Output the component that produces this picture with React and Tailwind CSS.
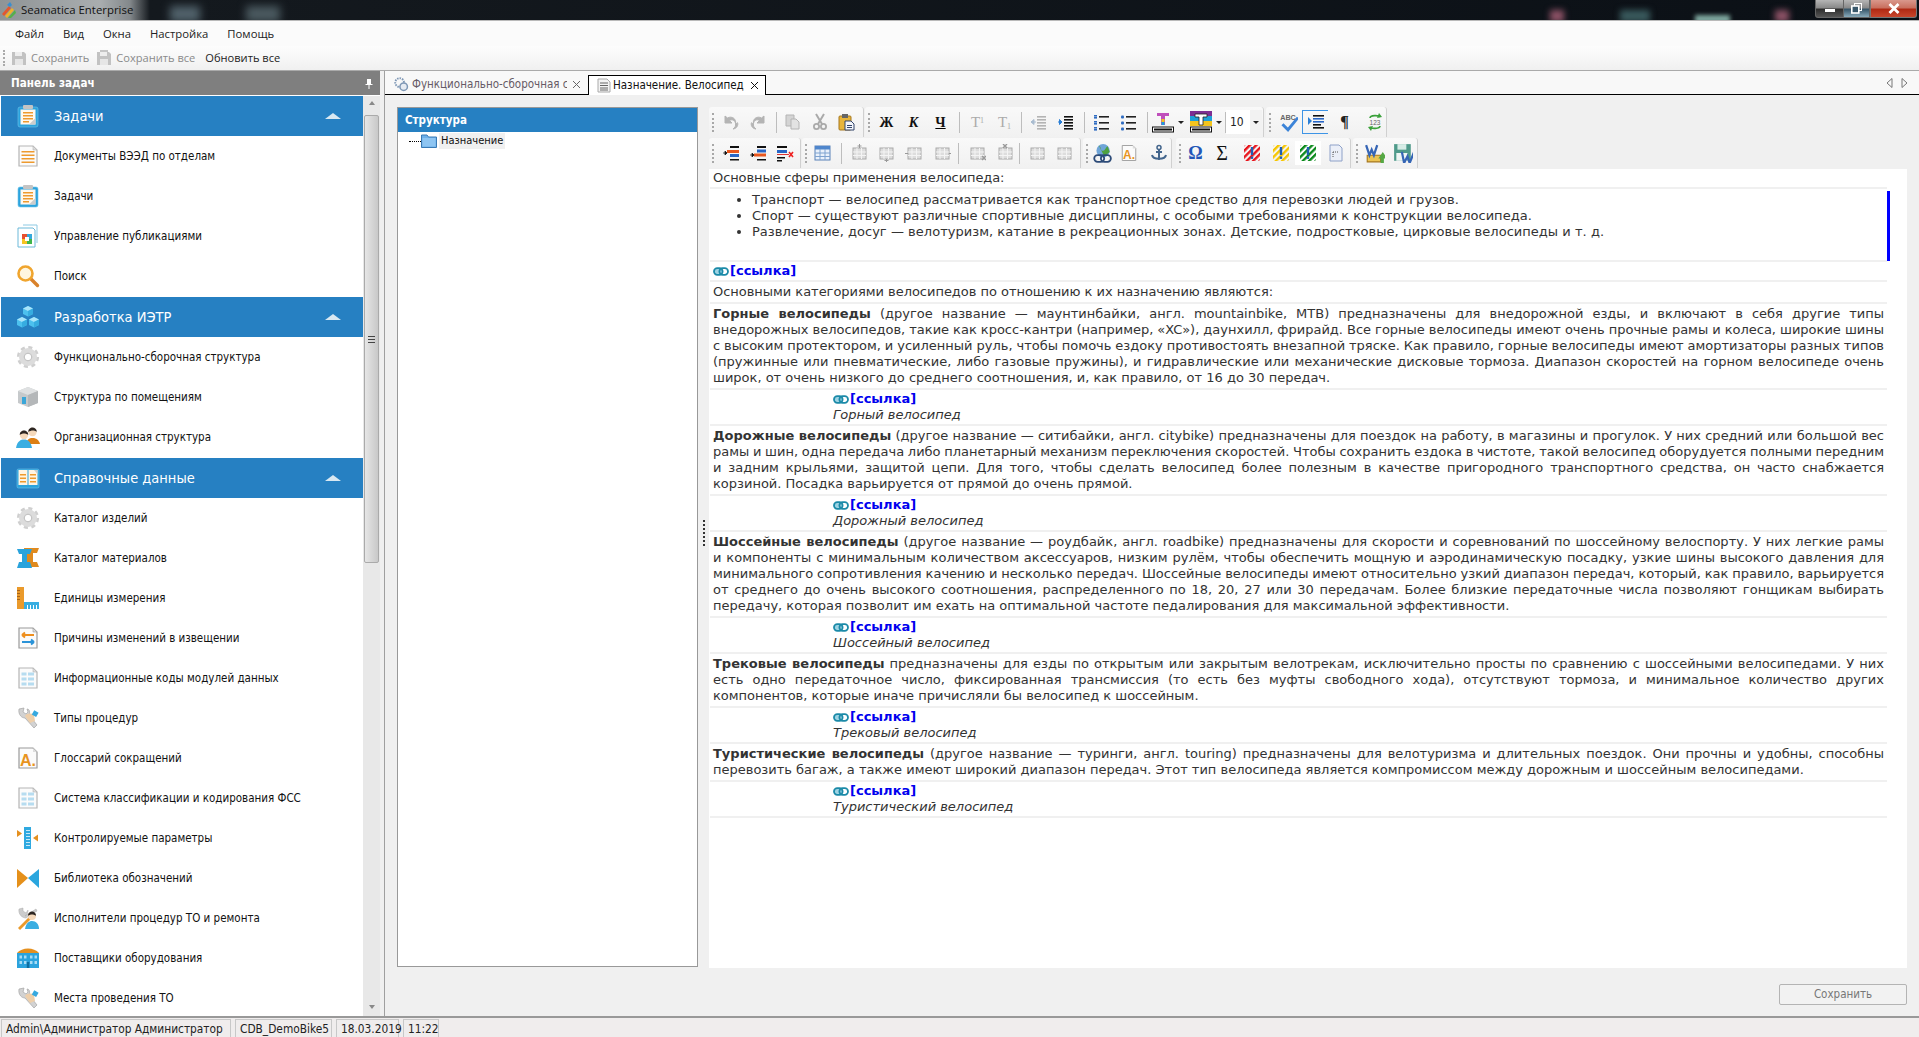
import React from 'react';

const ui = { fontFamily: '"DejaVu Sans Condensed","Liberation Sans",sans-serif' };

function Ic({ children, s = 24, c = '' }) {
  return (
    <svg width={s} height={s} viewBox="0 0 24 24" className={'shrink-0 ' + c}>
      {children}
    </svg>
  );
}

const OrangeLines = ({ x = 7, w = 10, ys = [8, 11, 14, 17] }) =>
  ys.map((y) => <rect key={y} x={x} y={y} width={w} height="1.5" fill="#ee9a2e" />);

function Paper({ children, stroke = '#b5b5b5', fill = '#fbfbfb' }) {
  return (
    <Ic>
      <path d="M3 2H17L21 6V22H3Z" fill={fill} stroke={stroke} strokeWidth="1.2" />
      <path d="M17 2V6H21Z" fill="#ddd" stroke={stroke} strokeWidth=".6" />
      {children}
    </Ic>
  );
}

const ClipboardIc = ({ s = 24 }) => (
  <Ic s={s}>
    <rect x="2" y="3" width="20" height="20" rx="2" fill="#2ba3dd" stroke="#6fc4ea" strokeWidth=".6" />
    <rect x="4.5" y="5.5" width="15" height="15" fill="#fff8ee" />
    <rect x="7" y="1" width="10" height="4" rx="1" fill="#c4c4c4" />
    <OrangeLines x={7} w={10} ys={[8, 11, 14]} />
    <rect x="7" y="17" width="6" height="1.5" fill="#ee9a2e" />
    <path d="M13 20.5L19.5 14V20.5Z" fill="#ccc" />
  </Ic>
);
const DocIc = () => (
  <Paper>
    <OrangeLines x={5.5} w={13} ys={[7, 10.5, 14, 17.5]} />
  </Paper>
);
const PubIc = () => (
  <Ic>
    <path d="M7 1H21V19" fill="none" stroke="#8cc9e3" strokeWidth="1" />
    <path d="M2 4H17L19 6V23H2Z" fill="#fff" stroke="#6db9d9" strokeWidth="1" />
    <rect x="6" y="10" width="5" height="5" fill="#e8502f" />
    <rect x="11" y="10" width="5" height="5" fill="#34a9dc" />
    <rect x="6" y="15" width="5" height="5" fill="#f5c322" />
    <rect x="11" y="15" width="5" height="5" fill="#3fb54a" />
    <rect x="9" y="13" width="4" height="4" fill="#fff" />
  </Ic>
);
const SearchIc = () => (
  <Ic>
    <path d="M14 14L21.5 21.5" stroke="#d9822b" strokeWidth="3.4" strokeLinecap="round" />
    <circle cx="9.5" cy="9.5" r="7" fill="#fff6df" stroke="#f0a52e" strokeWidth="2.6" />
  </Ic>
);
const Cube = ({ x, y }) => (
  <g transform={`translate(${x} ${y})`}>
    <path d="M5 0L10 2.5V8L5 10.5L0 8V2.5Z" fill="#4cc0ee" />
    <path d="M5 0L10 2.5L5 5L0 2.5Z" fill="#a8e4fa" />
    <path d="M5 5L10 2.5V8L5 10.5Z" fill="#36ace0" />
  </g>
);
const CubesIc = () => (
  <Ic>
    <Cube x={7} y={1} />
    <Cube x={1} y={12} />
    <Cube x={13} y={12} />
  </Ic>
);
const GearIc = () => (
  <Ic>
    <circle cx="12" cy="12" r="9.6" fill="none" stroke="#cfcfcf" strokeWidth="3" strokeDasharray="4 3.54" />
    <circle cx="12" cy="12" r="6.5" fill="none" stroke="#dcdcdc" strokeWidth="5" />
    <circle cx="12" cy="12" r="3.8" fill="#fff" stroke="#aaa" strokeWidth=".8" />
  </Ic>
);
const BoxIc = () => (
  <Ic>
    <path d="M12 2L22 6V18L12 22L2 18V6Z" fill="#c6c9cb" />
    <path d="M12 2L22 6L12 10L2 6Z" fill="#dfe1e2" />
    <path d="M12 10L22 6V18L12 22Z" fill="#b4b7b9" />
    <rect x="6" y="12" width="4" height="7" fill="#3aa6d8" />
  </Ic>
);
const PeopleIc = () => (
  <Ic>
    <path d="M10 19C11 13 15 13 17 13C20 13 23 15 24 19Z" fill="#dd7f14" />
    <circle cx="16.5" cy="7" r="4.2" fill="#f5d9bb" />
    <path d="M12.3 7C12 1 21 1 20.8 7C19 5 15 5 12.3 7Z" fill="#2d2622" />
    <path d="M0 23C1 16 5 14.5 8 14.5C12 14.5 15 17 16 23Z" fill="#3aaee2" />
    <circle cx="8" cy="10" r="4.2" fill="#f5d9bb" />
    <path d="M3.8 10C3.4 4 12.6 4 12.2 10C10 8 6 8 3.8 10Z" fill="#2d2622" />
  </Ic>
);
const BookIc = () => (
  <Ic>
    <rect x="1" y="3" width="22" height="19" rx="1.5" fill="#2ba3dd" stroke="#6fc4ea" strokeWidth=".6" />
    <rect x="2.5" y="4" width="9" height="15" fill="#fff4e3" />
    <rect x="12.5" y="4" width="9" height="15" fill="#fff4e3" />
    <OrangeLines x={4} w={6} ys={[8, 11.5, 15]} />
    <OrangeLines x={14} w={6} ys={[8, 11.5, 15]} />
    <path d="M18 4L21.5 4V8Z" fill="#ccc" />
  </Ic>
);
const BeamIc = () => (
  <Ic>
    <path d="M8 2H23L21 7H17V16H21L23 21H10Z" fill="#e08a1e" />
    <path d="M1 3H16L14 8H11V16H14L16 22H1L3 16H6V8H3Z" fill="#2aa3dc" />
  </Ic>
);
const RulerIc = () => (
  <Ic>
    <rect x="1" y="1" width="7" height="22" fill="#ea9a2b" />
    <rect x="8" y="16" width="15" height="7" fill="#37aee2" />
    {[4, 7, 10, 13].map((y) => <rect key={y} x="1" y={y} width="3" height="1" fill="#a8651a" />)}
    {[11, 14, 17, 20].map((x) => <rect key={x} x={x} y="19" width="1" height="4" fill="#fff" />)}
  </Ic>
);
const ReasonIc = () => (
  <Paper stroke="#9a9a9a">
    <path d="M6 9H18M6 9L9 6.5M6 9L9 11.5" stroke="#ee8f1e" strokeWidth="2" fill="none" />
    <path d="M6 16H18M18 16L15 13.5M18 16L15 18.5" stroke="#2a93d8" strokeWidth="2" fill="none" />
  </Paper>
);
const CodeIc = () => (
  <Paper>
    {[6.5, 11.5, 16.5].map((y) => (
      <g key={y}>
        <rect x="5.5" y={y} width="5" height="3" fill="#b6dcf0" />
        <rect x="12" y={y} width="6" height="3" fill="#b6dcf0" />
      </g>
    ))}
  </Paper>
);
const ToolIc = () => (
  <Ic>
    <path d="M3 3L8 2L7 6L10 8L12 6L11 3C14 3 14 7 13 9L21 19L18 22L9 12C6 12 2 9 3 3Z" fill="#d2d2d2" stroke="#a5a5a5" strokeWidth=".7" />
    <path d="M9 10C11 7 15 7 18 9L19 15L14 17Z" fill="#eecfaa" />
    <rect x="17" y="5" width="5" height="5" fill="#37a9df" transform="rotate(30 19 7)" />
  </Ic>
);
const GlossIc = ({ s = 24 }) => (
  <Ic s={s}>
    <path d="M3 2H17L21 6V22H3Z" fill="#fbfbfb" stroke="#9a9a9a" strokeWidth="1.2" />
    <path d="M17 2V6H21Z" fill="#ddd" />
    <text x="12" y="20" textAnchor="middle" fontFamily="Liberation Sans" fontWeight="700" fontSize="16" fill="#e8941f">A.</text>
  </Ic>
);
const ParamIc = () => (
  <Ic>
    <rect x="8" y="1" width="7" height="22" fill="#2fa9e0" />
    {[4, 7, 10, 13, 16, 19].map((y) => <rect key={y} x="10" y={y} width="4" height="1" fill="#c6e9f8" />)}
    <path d="M1 4L6 7.5L1 11Z" fill="#e5901f" />
    <path d="M22 8.5L17 12L22 15.5Z" fill="#e5901f" />
  </Ic>
);
const BowIc = () => (
  <Ic>
    <path d="M1 3L12 12L1 22Z" fill="#e5901a" />
    <path d="M23 3L12 12L23 22Z" fill="#2aa6de" />
  </Ic>
);
const WorkerIc = () => (
  <Ic>
    <path d="M3 3L7 2L7 5L10 7L12 4C12 7 11 9 9 10L20 3L21 5L10 12C6 12 2 8 3 3Z" fill="#ccc" stroke="#aaa" strokeWidth=".5" />
    <path d="M2 22L13 11L15 13L4 24Z" fill="#ea9a2b" />
    <path d="M9 23C10 17 13 15 16 15C20 15 23 18 23 23Z" fill="#3aaee2" />
    <circle cx="16" cy="10" r="4" fill="#f5d9bb" />
    <path d="M12 10C11.6 4 20.4 4 20 10C18 8 14 8 12 10Z" fill="#2d2622" />
  </Ic>
);
const BuildingIc = () => (
  <Ic>
    <path d="M1 7C6 1 18 1 23 7Z" fill="#e5901f" />
    <rect x="1" y="7" width="22" height="15" fill="#2ba3dd" />
    {[3.5, 8, 14, 18.5].map((x) => (
      <g key={x}>
        <rect x={x} y="9.5" width="2.5" height="3" fill="#a7dcf5" />
        <rect x={x} y="15" width="2.5" height="3" fill="#a7dcf5" />
      </g>
    ))}
    <rect x="10.8" y="16" width="2.5" height="6" fill="#0d6ea2" />
  </Ic>
);

const groups = [
  {
    title: 'Задачи',
    icon: <ClipboardIc />,
    items: [
      ['Документы ВЭЭД по отделам', <DocIc />],
      ['Задачи', <ClipboardIc />],
      ['Управление публикациями', <PubIc />],
      ['Поиск', <SearchIc />],
    ],
  },
  {
    title: 'Разработка ИЭТР',
    icon: <CubesIc />,
    items: [
      ['Функционально-сборочная структура', <GearIc />],
      ['Структура по помещениям', <BoxIc />],
      ['Организационная структура', <PeopleIc />],
    ],
  },
  {
    title: 'Справочные данные',
    icon: <BookIc />,
    items: [
      ['Каталог изделий', <GearIc />],
      ['Каталог материалов', <BeamIc />],
      ['Единицы измерения', <RulerIc />],
      ['Причины изменений в извещении', <ReasonIc />],
      ['Информационные коды модулей данных', <CodeIc />],
      ['Типы процедур', <ToolIc />],
      ['Глоссарий сокращений', <GlossIc />],
      ['Система классификации и кодирования ФСС', <CodeIc />],
      ['Контролируемые параметры', <ParamIc />],
      ['Библиотека обозначений', <BowIc />],
      ['Исполнители процедур ТО и ремонта', <WorkerIc />],
      ['Поставщики оборудования', <BuildingIc />],
      ['Места проведения ТО', <ToolIc />],
    ],
  },
];

function TitleBar() {
  return (
    <div className="relative h-[20px] shrink-0 overflow-hidden bg-[linear-gradient(90deg,#8f9496_0,#a9adaf_100px,#83888b_130px,#14191e_150px,#0b1016_100%)] flex items-center">
      <div className="absolute left-[170px] top-[6px] w-[30px] h-[16px] bg-[#51626b] blur-[4px]" />
      <div className="absolute left-[246px] top-[6px] w-[34px] h-[16px] bg-[#4b5a60] blur-[4px]" />
      <div className="absolute left-[1550px] top-[10px] w-[14px] h-[12px] bg-[#8d5266] blur-[3px]" />
      <div className="absolute left-[1620px] top-[10px] w-[30px] h-[12px] bg-[#39595c] blur-[3px]" />
      <div className="absolute left-[1695px] top-[15px] w-[35px] h-[8px] bg-[#7fa8a0] blur-[2px]" />
      <div className="absolute left-[1775px] top-[10px] w-[14px] h-[12px] bg-[#8d5266] blur-[3px]" />
      <svg width="16" height="16" viewBox="0 0 16 16" className="ml-[1px]">
        <path d="M1 12L8 4L10 6L3 14Z" fill="#e4572e" />
        <path d="M4 14L11 6L13 8L6 16Z" fill="#f0b32a" />
        <path d="M7 16L14 8L15 11L10 16Z" fill="#55b04a" />
        <path d="M6 3L9 0L11 3L9 5Z" fill="#3a8fd0" />
      </svg>
      <span className="ml-[4px] text-[11.4px] text-[#111]" style={{ fontFamily: '"Open Sans",sans-serif' }}>Seamatica Enterprise</span>
      <div className="ml-auto mr-[2px] flex h-[18px] self-start relative">
        <div className="w-[29px] rounded-bl-[3px] border border-t-0 border-[#666] bg-[linear-gradient(#b5b5b5,#8a8a8a_45%,#2e2e2e_55%,#555)] flex items-center justify-center">
          <div className="w-[10px] h-[3px] mt-[3px] bg-white" />
        </div>
        <div className="w-[26px] border-b border-r border-[#666] bg-[linear-gradient(#b5b5b5,#8a8a8a_45%,#39576a_55%,#8ab)] flex items-center justify-center">
          <svg width="11" height="11" viewBox="0 0 11 11">
            <rect x="3.5" y=".5" width="7" height="7" fill="none" stroke="#fff" />
            <rect x=".8" y="3" width="7" height="7" fill="#39576a" stroke="#fff" strokeWidth="1.6" />
          </svg>
        </div>
        <div className="w-[47px] rounded-br-[3px] border border-t-0 border-[#777] bg-[linear-gradient(#d9988c,#c9705f_45%,#b02a14_55%,#c8452c)] flex items-center justify-center">
          <svg width="12" height="11" viewBox="0 0 12 11">
            <path d="M1.5 1L10.5 10M10.5 1L1.5 10" stroke="#fff" strokeWidth="2.8" />
          </svg>
        </div>
      </div>
    </div>
  );
}

const SaveIc = ({ double }) => (
  <svg width="16" height="16" viewBox="0 0 16 16" className="shrink-0">
    {double && <path d="M4 0H12V4H4Z" fill="#c5c5c5" />}
    <path d="M1 2H13L15 4V15H1Z" fill="#c2c2c2" />
    <rect x="4" y="2" width="7" height="4" fill="#ededed" />
    <rect x="4" y="9" width="8" height="6" fill="#e6e6e6" />
  </svg>
);

function TopBars() {
  const seg = '"Open Sans",sans-serif';
  return (
    <>
      <div className="h-[1px] shrink-0 bg-[#b9b9b9]" />
      <div className="h-[25px] shrink-0 bg-[#fbfbfb] flex items-center pl-[15px] pt-[1px] gap-[19px] text-[11.3px] text-[#222]" style={{ fontFamily: seg }}>
        {['Файл', 'Вид', 'Окна', 'Настройка', 'Помощь'].map((m) => <span key={m}>{m}</span>)}
      </div>
      <div className="h-[25px] shrink-0 bg-[linear-gradient(#fdfdfd,#f0f0f0)] border-b border-[#aaa] flex items-center pl-[3px] text-[11.1px]" style={{ fontFamily: seg }}>
        <div className="h-[16px] border-l-2 border-dotted border-[#aaa]" />
        <div className="ml-[6px]"><SaveIc /></div>
        <span className="ml-[4px] text-[#8a8a8a]">Сохранить</span>
        <div className="ml-[7px]"><SaveIc double /></div>
        <span className="ml-[4px] text-[#8a8a8a]">Сохранить все</span>
        <span className="ml-[10px] text-[#222]">Обновить все</span>
      </div>
    </>
  );
}

function Sidebar() {
  return (
    <div className="w-[380px] shrink-0 flex flex-col bg-white pl-[1px]" style={ui}>
      <div className="h-[24px] -ml-[1px] shrink-0 bg-[#7f7f7f] flex items-center justify-between pl-[11px] pr-[6px] pt-[1px]">
        <span className="text-[11.6px] font-bold text-white">Панель задач</span>
        <svg width="10" height="12" viewBox="0 0 10 12">
          <path d="M3 1H7V6H8.5V7H1.5V6H3ZM4.5 7H5.5V11H4.5Z" fill="#fff" />
        </svg>
      </div>
      <div className="h-[921px] mt-[1px] flex overflow-hidden">
        <div className="w-[362px] shrink-0">
          {groups.map((g) => (
            <div key={g.title} className="mb-[1px]">
              <div className="h-[40px] bg-[#2680c2] flex items-center pl-[15px] pr-[22px] text-white">
                {g.icon}
                <span className="ml-[14px] mt-[1px] text-[14.5px]">{g.title}</span>
                <div className="ml-auto w-0 h-0 border-x-[8px] border-x-transparent border-b-[6px] border-b-[#d8e8f2]" />
              </div>
              {g.items.map(([t, ic]) => (
                <div key={t} className="h-[40px] flex items-center pl-[15px] text-[11.5px] text-[#111]">
                  {ic}
                  <span className="ml-[14px] mt-[1px]">{t}</span>
                </div>
              ))}
            </div>
          ))}
        </div>
        <div className="w-[17px] shrink-0 bg-[#e8e8e8] flex flex-col items-center relative">
          <div className="mt-[5px] w-0 h-0 border-x-[3px] border-x-transparent border-b-[4px] border-b-[#888]" />
          <div className="mt-[10px] w-[15px] h-[448px] border border-[#aaa] rounded-[2px] bg-[linear-gradient(90deg,#e6e6e6,#c8c8c8)] flex items-center justify-center">
            <div className="w-[7px] h-[7px] border-y-[1px] border-[#444] flex items-center"><div className="w-full h-[1px] bg-[#444]" /></div>
          </div>
          <div className="mt-auto mb-[7px] w-0 h-0 border-x-[3px] border-x-transparent border-t-[4px] border-t-[#888]" />
        </div>
      </div>
    </div>
  );
}

const T = ({ children, x = '#aaa', bold, size = 13 }) => (
  <span style={{ fontFamily: 'Liberation Serif,serif', color: x, fontSize: size, fontWeight: bold ? 700 : 400 }}>{children}</span>
);

const G = ({ children, s = 18 }) => (
  <svg width={s} height={s} viewBox="0 0 18 18">{children}</svg>
);

const Bars = ({ x = 4, ys, w = 10, fill = '#222' }) =>
  ys.map((y, i) => <rect key={i} x={x} y={y} width={Array.isArray(w) ? w[i] : w} height="1.6" fill={Array.isArray(fill) ? fill[i] : fill} />);

const gy = '#b4b4b4';
const Ico = {
  undo: <G><path d="M3 3V10H10L7.5 7.5C10 6 13 7 13.5 10.5C14.5 6 10 2.5 5.5 5Z M13.5 10.5C14 12.5 13 15 11 16C15 15.5 16.5 12 15.5 9.5" fill={gy} stroke={gy} /></G>,
  redo: <G><path d="M15 3V10H8L10.5 7.5C8 6 5 7 4.5 10.5C3.5 6 8 2.5 12.5 5Z M4.5 10.5C4 12.5 5 15 7 16C3 15.5 1.5 12 2.5 9.5" fill={gy} stroke={gy} /></G>,
  copy: <G><path d="M2 2H10V13H2Z" fill="#d4d4d4" stroke={gy} /><path d="M7 6H12L15 9V16H7Z" fill="#e2e2e2" stroke={gy} /></G>,
  cut: <G><path d="M5 1L11 11M13 1L7 11" stroke="#aaa" strokeWidth="2" /><circle cx="5.5" cy="13.5" r="2.6" fill="none" stroke="#aaa" strokeWidth="1.8" /><circle cx="12.5" cy="13.5" r="2.6" fill="none" stroke="#aaa" strokeWidth="1.8" /></G>,
  paste: <G><rect x="1" y="3" width="12" height="14" rx="1" fill="#e8b53b" stroke="#a5771e" /><rect x="4" y="1" width="6" height="4" fill="#666" /><path d="M7 8H13L16 11V17H7Z" fill="#f4f6fb" stroke="#33456b" /><rect x="9" y="12" width="5" height="1" fill="#33456b" /><rect x="9" y="14" width="5" height="1" fill="#33456b" /></G>,
  outdent: <G><Bars x={7} ys={[3, 6, 9, 12, 15]} w={9} fill={gy} /><path d="M6 9H1M1 9L4 6.5V11.5Z" stroke="#a9bcd0" fill="#a9bcd0" /></G>,
  indent: <G><Bars x={7} ys={[3, 6, 9, 12, 15]} w={9} fill="#111" /><path d="M1 9H5M5 9L2.5 6.5V11.5Z" stroke="#2a7fd6" fill="#2a7fd6" /></G>,
  ol: <G><Bars x={7} ys={[3, 9, 15]} w={10} /><Bars x={2} ys={[2, 4, 8, 10, 14, 16]} w={3} fill="#2f6cc2" /></G>,
  ul: <G><Bars x={7} ys={[3, 9, 15]} w={10} />{[3, 9, 15].map((y) => <rect key={y} x="2" y={y - .5} width="3" height="3" rx="1" fill="#2f6cc2" />)}</G>,
  spell: <G s={20}><path d="M4 11L9 16L18 5" fill="none" stroke="#3c84d8" strokeWidth="2.6" /><text x="9" y="7" textAnchor="middle" fontFamily="Liberation Sans" fontWeight="700" fontSize="6.5" fill="#666">ABC</text></G>,
  para: <G><Bars x={6} ys={[2, 5, 8, 11, 14]} w={[11, 11, 11, 8, 11]} fill={['#111', '#2967c7', '#2967c7', '#111', '#111']} /><path d="M1 4L5 8L1 12Z" fill="#2a7fd6" /></G>,
  recalc: <G><path d="M4 5C4 2 13 2 14 4M14 13C14 16 5 16 4 14" fill="none" stroke="#3aa13a" strokeWidth="1.6" /><path d="M13 0L16 4L11 5ZM5 18L2 14L7 13Z" fill="#3aa13a" /><text x="9" y="11.5" textAnchor="middle" fontFamily="Liberation Sans" fontSize="6.5" fill="#666">123</text></G>,
  ins1: <G><path d="M1 9H5M5 9L3 7V11Z" stroke="#111" fill="#111" strokeWidth=".7" /><rect x="8" y="2" width="9" height="2" fill="#111" /><rect x="5" y="6" width="12" height="3" fill="#e8571f" /><rect x="8" y="10" width="9" height="3" fill="#2967c7" /><rect x="8" y="15" width="9" height="1.5" fill="#111" /></G>,
  ins2: <G><path d="M1 11H5M5 11L3 9V13Z" stroke="#111" fill="#111" strokeWidth=".7" /><rect x="8" y="2" width="9" height="2" fill="#111" /><rect x="8" y="5.5" width="9" height="3" fill="#2967c7" /><rect x="5" y="9.5" width="12" height="3" fill="#e8571f" /><rect x="8" y="15" width="9" height="1.5" fill="#111" /></G>,
  del: <G><rect x="1" y="2" width="10" height="2" fill="#111" /><rect x="1" y="6" width="10" height="3" fill="#2967c7" /><rect x="1" y="10" width="12" height="1" fill="#d33" /><path d="M13 8L17 13M17 8L13 13" stroke="#e22" strokeWidth="1.6" /><rect x="1" y="13" width="8" height="1.5" fill="#111" /><rect x="1" y="16" width="5" height="1.5" fill="#111" /></G>,
  table: <G><rect x="1" y="2" width="15" height="14" fill="#e9f1fb" stroke="#5a82b8" /><rect x="1" y="2" width="15" height="3.5" fill="#4f86cc" /><path d="M1 9H16M1 12.5H16M6 5V16M11 5V16" stroke="#7fa3d0" /></G>,
  anchor: <G><circle cx="9" cy="3.5" r="2" fill="none" stroke="#43658c" strokeWidth="1.5" /><path d="M9 5V16M6 8H12M2 11C3 16 15 16 16 11" fill="none" stroke="#43658c" strokeWidth="2" /></G>,
  file: <G><path d="M3 1H12L15 4V17H3Z" fill="#ebeff8" stroke="#8ea1c8" /><path d="M6 8V14M6 8H12" stroke="#555" strokeDasharray="1 1" /></G>,
  w1: <G s={20}><path d="M2 11H14V17H2Z" fill="#ecc453" stroke="#a5771e" /><path d="M12 14L16 8L20 14H17V18H14V14Z" fill="#55a844" /><path d="M1 2L4 11L6 6L8 11L11 2" fill="none" stroke="#3565b5" strokeWidth="2" /></G>,
  w2: <G s={20}><path d="M1 1H16V16H1Z" fill="#4f9a8a" /><rect x="4" y="1" width="8" height="5" fill="#d6ece6" /><rect x="3" y="9" width="10" height="7" fill="#eef5f3" /><path d="M8 8L10 18L13 12L15 18L19 8" fill="none" stroke="#3565b5" strokeWidth="2" /></G>,
  link: <G s={20}><circle cx="10" cy="7" r="6" fill="#6fa5d8" /><path d="M6 2C9 4 7 7 10 7C12 7 12 4 14 3L16 8L11 12Z" fill="#4ea13f" /><rect x="2" y="11" width="9" height="6" rx="3" fill="none" stroke="#2d4b78" strokeWidth="1.6" /><rect x="8" y="11" width="9" height="6" rx="3" fill="none" stroke="#2d4b78" strokeWidth="1.6" /></G>,
};

function GridIc({ mark }) {
  return (
    <G>
      <rect x="3" y="4" width="13" height="11" fill="#ddd" stroke="#aaa" />
      <path d="M3 8H16M3 11.5H16M7 4V15M11.5 4V15" stroke="#f4f4f4" />
      {mark}
    </G>
  );
}

const Hatch = ({ id, c }) => (
  <svg width="18" height="18" viewBox="0 0 18 18">
    <defs>
      <pattern id={id} width="4.5" height="4.5" patternUnits="userSpaceOnUse" patternTransform="rotate(45)">
        <rect width="2.4" height="4.5" fill={c} />
      </pattern>
    </defs>
    <rect x="1" y="1" width="16" height="16" rx="2" fill={`url(#${id})`} />
    <rect x="7.8" y="3" width="2.4" height="8" fill="#1f5fb5" />
    <rect x="7.8" y="12.5" width="2.4" height="2.4" fill="#1f5fb5" />
  </svg>
);

const Grip = () => <div className="w-[8px] shrink-0 flex justify-center"><div className="h-[19px] border-l-2 border-dotted border-[#a8a8a8]" /></div>;
const Sep = ({ c }) => <div className={'w-[1px] h-[21px] shrink-0 bg-[#bdbdbd] ' + c} />;
const B = ({ children, c = 'w-[27px]' }) => <div className={'h-[24px] shrink-0 flex items-center justify-center ' + c}>{children}</div>;
const Arrow = () => <div className="w-0 h-0 border-x-[3px] border-x-transparent border-t-[3px] border-t-[#222]" />;

function Bar({ w, children }) {
  return (
    <div className={'h-[30px] shrink-0 flex items-center rounded-t-[3px] border-r border-[#d0d0d0] bg-[linear-gradient(#f9f9f9,#f1f1f1)] ' + w}>
      {children}
    </div>
  );
}

function ColorIc({ bg }) {
  return (
    <svg width="22" height="22" viewBox="0 0 22 22">
      {bg ? (
        <>
          <rect x="0" y="0" width="22" height="5" fill="#7d2f92" />
          <rect x="0" y="5" width="22" height="5" fill="#1ea0d8" />
          <rect x="0" y="10" width="22" height="5" fill="#f4c51e" />
          <path d="M5 3H17V6H13V14H9V6H5Z" fill="#fff" stroke="#222" strokeWidth=".8" />
        </>
      ) : (
        <>
          <path d="M5 2H17V5H13V14H9V5H5Z" fill="#c04fbc" />
          <rect x="9.5" y="8" width="3" height="3" fill="#f4c51e" />
          <rect x="9.5" y="11" width="3" height="3" fill="#1ea0d8" />
        </>
      )}
      <rect x="0.5" y="16" width="21" height="5" fill="#fff" stroke="#111" />
      <rect x="2" y="17.5" width="18" height="2" fill="#111" />
    </svg>
  );
}

function Toolbars() {
  return (
    <div className="h-[62px] shrink-0">
      <div className="flex gap-[2px]">
        <Bar w="w-[155px]">
          <Grip />
          <B>{Ico.undo}</B><B>{Ico.redo}</B>
          <Sep c="ml-[5px] mr-[2px]" />
          <B>{Ico.copy}</B><B>{Ico.cut}</B><B>{Ico.paste}</B>
        </Bar>
        <Bar w="w-[399px] -ml-[1px]">
          <Grip />
          <B><T x="#111" bold size={14}>Ж</T></B>
          <B><span className="italic"><T x="#111" bold size={14}>К</T></span></B>
          <B><span className="underline"><T x="#111" bold size={14}>Ч</T></span></B>
          <Sep c="ml-[5px] mr-[4px]" />
          <B><T size={15}>T<sup className="text-[8px]">1</sup></T></B>
          <B><T size={15}>T<sub className="text-[8px]">1</sub></T></B>
          <Sep c="ml-[3px] mr-[3px]" />
          <B>{Ico.outdent}</B><B>{Ico.indent}</B>
          <Sep c="ml-[5px] mr-[2px]" />
          <B>{Ico.ol}</B><B c="w-[28px]">{Ico.ul}</B>
          <Sep c="ml-[5px] mr-[3px]" />
          <B c="w-[39px] gap-[4px] justify-start pl-[1px]"><ColorIc /><Arrow /></B>
          <B c="w-[32px] gap-[4px] justify-start"><ColorIc bg /><Arrow /></B>
          <Sep c="ml-[3px]" />
          <div className="w-[36px] h-[24px] bg-white flex items-center pl-[4px] text-[12px] text-[#222]" style={ui}>
            10<div className="ml-auto w-[12px] h-full bg-[#f2f2f2] flex items-center justify-center"><Arrow /></div>
          </div>
        </Bar>
        <Bar w="w-[121px]">
          <Grip />
          <B c="w-[28px]">{Ico.spell}</B>
          <B c="w-[26px] border border-[#3d94e6] border-r-0">{Ico.para}</B>
          <B c="w-[33px]"><T x="#222" bold size={16}>¶</T></B>
          <B c="w-[28px]">{Ico.recalc}</B>
        </Bar>
      </div>
      <div className="flex gap-[1px] mt-[1px]">
        <Bar w="w-[92px]">
          <Grip /><B>{Ico.ins1}</B><B>{Ico.ins2}</B><B>{Ico.del}</B>
        </Bar>
        <Bar w="w-[279px]">
          <Grip /><div className="-ml-[1px]"><B>{Ico.table}</B></div>
          <Sep c="ml-[5px] mr-[3px]" />
          <B><GridIc mark={<path d="M9.5 0V4M7.5 2H11.5" stroke="#999" />} /></B>
          <B><GridIc mark={<path d="M9.5 15V18M7.5 16.5H11.5" stroke="#999" />} /></B>
          <B c="w-[29px]"><GridIc mark={<path d="M0 9.5H3" stroke="#999" />} /></B>
          <B><GridIc mark={<path d="M16 9.5H18" stroke="#999" />} /></B>
          <Sep c="ml-[3px] mr-[4px]" />
          <B><GridIc mark={<path d="M14 12L18 16M18 12L14 16" stroke="#999" strokeWidth="1.4" />} /></B>
          <B c="w-[29px]"><GridIc mark={<path d="M7 0L11 4M11 0L7 4" stroke="#999" strokeWidth="1.4" />} /></B>
          <Sep c="mr-[3px]" />
          <B><GridIc /></B><B><GridIc /></B>
        </Bar>
        <Bar w="w-[89px] ml-[1px]">
          <Grip /><B c="w-[21px]">{Ico.link}</B><B c="w-[33px]"><GlossIc s={18} /></B><B>{Ico.anchor}</B>
        </Bar>
        <Bar w="w-[175px] ml-[3px]">
          <Grip />
          <B c="w-[23px]"><T x="#2356b8" bold size={18}>Ω</T></B>
          <B c="w-[30px]"><T x="#111" size={20}>Σ</T></B>
          <B c="w-[29px]"><Hatch id="hr" c="#e8141c" /></B>
          <B c="w-[29px]"><Hatch id="hy" c="#f7c600" /></B>
          <B c="w-[26px] bg-white"><Hatch id="hg" c="#0b8a1c" /></B>
          <B c="w-[30px]">{Ico.file}</B>
        </Bar>
        <Bar w="w-[65px] ml-[1px]">
          <Grip /><B c="w-[28px]">{Ico.w1}</B><B c="w-[27px]">{Ico.w2}</B>
        </Bar>
      </div>
    </div>
  );
}

const Chain = () => (
  <svg width="16" height="9" viewBox="0 0 16 9" className="inline-block mr-[1px]">
    <rect x="1" y="1.2" width="8.6" height="6.6" rx="3.3" fill="#9fd4e4" stroke="#1b8aa8" strokeWidth="1.8" />
    <rect x="6.4" y="1.2" width="8.6" height="6.6" rx="3.3" fill="none" stroke="#1b8aa8" strokeWidth="1.8" />
  </svg>
);

const Lnk = () => (
  <div className="leading-[16px] h-[16px] whitespace-nowrap">
    <Chain /><span className="font-bold text-[#0000ee]">[ссылка]</span>
  </div>
);

const Block = ({ children, c = '' }) => <div className={'bg-white px-[3px] border-b-2 border-[#f0f0f0] text-[#333] ' + c}>{children}</div>;

function Para({ lead, lines }) {
  return (
    <Block c="pt-[2px] pb-[2px] box-content">
      {lines.map((l, i) => (
        <div key={i} className={'h-[16px] leading-[16px] ' + (i < lines.length - 1 ? 'whitespace-nowrap text-justify [text-align-last:justify] [word-spacing:-2px]' : 'whitespace-nowrap')}>
          {i === 0 && <b>{lead}</b>}{l}
        </div>
      ))}
    </Block>
  );
}

function Caption({ text }) {
  return (
    <Block c="h-[36px] pl-[123px] pt-[1px]">
      <Lnk />
      <div className="italic h-[16px] leading-[16px]">{text}</div>
    </Block>
  );
}

function Doc() {
  return (
    <div className="h-[799px] bg-white text-[13px] pl-[1px] pr-[20px] overflow-hidden" style={{ fontFamily: '"DejaVu Sans",sans-serif' }}>
      <Block c="h-[20px] pt-[1px] leading-[16px] tracking-[-0.1px]">Основные сферы применения велосипеда:</Block>
      <Block c="h-[73px] relative pt-[3px] pl-[42px] tracking-[0.03px]">
        <ul className="list-disc">
          <li className="h-[16px] leading-[16px] whitespace-nowrap">Транспорт — велосипед рассматривается как транспортное средство для перевозки людей и грузов.</li>
          <li className="h-[16px] leading-[16px] whitespace-nowrap">Спорт — существуют различные спортивные дисциплины, с особыми требованиями к конструкции велосипеда.</li>
          <li className="h-[16px] leading-[16px] whitespace-nowrap">Развлечение, досуг — велотуризм, катание в рекреационных зонах. Детские, подростковые, цирковые велосипеды и т. д.</li>
        </ul>
        <div className="absolute right-[-3px] top-[2px] bottom-[-1px] w-[3px] bg-[#0000ff]" />
      </Block>
      <Block c="h-[20px] pt-[1px]"><Lnk /></Block>
      <Block c="h-[22px] pt-[2px] leading-[16px] tracking-[-0.03px]">Основными категориями велосипедов по отношению к их назначению являются:</Block>
      <Para
        lead="Горные велосипеды"
        lines={[
          ' (другое название — маунтинбайки, англ. mountainbike, MTB) предназначены для внедорожной езды, и включают в себя другие типы',
          'внедорожных велосипедов, такие как кросс-кантри (например, «XC»), даунхилл, фрирайд. Все горные велосипеды имеют очень прочные рамы и колеса, широкие шины',
          'с высоким протектором, и усиленный руль, чтобы помочь ездоку противостоять внезапной тряске. Как правило, горные велосипеды имеют амортизаторы разных типов',
          '(пружинные или пневматические, либо газовые пружины), и гидравлические или механические дисковые тормоза. Диапазон скоростей на горном велосипеде очень',
          'широк, от очень низкого до среднего соотношения, и, как правило, от 16 до 30 передач.',
        ]}
      />
      <Caption text="Горный велосипед" />
      <Para
        lead="Дорожные велосипеды"
        lines={[
          ' (другое название — ситибайки, англ. citybike) предназначены для поездок на работу, в магазины и прогулок. У них средний или большой вес',
          'рамы и шин, одна передача либо планетарный механизм переключения скоростей. Чтобы сохранить ездока в чистоте, такой велосипед оборудуется полными передним',
          'и задним крыльями, защитой цепи. Для того, чтобы сделать велосипед более полезным в качестве пригородного транспортного средства, он часто снабжается',
          'корзиной. Посадка варьируется от прямой до очень прямой.',
        ]}
      />
      <Caption text="Дорожный велосипед" />
      <Para
        lead="Шоссейные велосипеды"
        lines={[
          ' (другое название — роудбайк, англ. roadbike) предназначены для скорости и соревнований по шоссейному велоспорту. У них легкие рамы',
          'и компоненты с минимальным количеством аксессуаров, низким рулём, чтобы обеспечить мощную и аэродинамическую посадку, узкие шины высокого давления для',
          'минимального сопротивления качению и несколько передач. Шоссейные велосипеды имеют относительно узкий диапазон передач, который, как правило, варьируется',
          'от среднего до очень высокого соотношения, распределенного по 18, 20, 27 или 30 передачам. Более близкие передаточные числа позволяют гонщикам выбирать',
          'передачу, которая позволит им ехать на оптимальной частоте педалирования для максимальной эффективности.',
        ]}
      />
      <Caption text="Шоссейный велосипед" />
      <Para
        lead="Трековые велосипеды"
        lines={[
          ' предназначены для езды по открытым или закрытым велотрекам, исключительно просты по сравнению с шоссейными велосипедами. У них',
          'есть одно передаточное число, фиксированная трансмиссия (то есть без муфты свободного хода), отсутствуют тормоза, и минимальное количество других',
          'компонентов, которые иначе причисляли бы велосипед к шоссейным.',
        ]}
      />
      <Caption text="Трековый велосипед" />
      <Para
        lead="Туристические велосипеды"
        lines={[
          ' (другое название — туринги, англ. touring) предназначены для велотуризма и длительных поездок. Они прочны и удобны, способны',
          'перевозить багаж, а также имеют широкий диапазон передач. Этот тип велосипеда является компромиссом между дорожным и шоссейным велосипедами.',
        ]}
      />
      <Caption text="Туристический велосипед" />
    </div>
  );
}

function RightPane() {
  return (
    <div className="flex-1 min-w-0 border-l border-[#a0a0a0] ml-[4px] bg-[#f0f0f0] flex flex-col" style={ui}>
      <div className="h-[24px] shrink-0 bg-[#f8f8f8] border-b border-black flex items-end relative text-[11.5px]">
        <div className="w-[203px] h-[19px] flex items-center text-[#665a66] pl-[9px] shrink-0">
          <svg width="15" height="15" viewBox="0 0 24 24" className="shrink-0">
            <circle cx="9" cy="9" r="7" fill="none" stroke="#7e97b5" strokeWidth="3" strokeDasharray="2.4 1.6" />
            <circle cx="15.5" cy="15.5" r="6" fill="#e6ebf2" stroke="#7e97b5" strokeWidth="2.4" />
          </svg>
          <span className="ml-[3px] w-[155px] overflow-hidden whitespace-nowrap">Функционально-сборочная структура</span>
          <svg width="9" height="9" viewBox="0 0 9 9" className="ml-[5px]"><path d="M1 1L8 8M8 1L1 8" stroke="#666" /></svg>
        </div>
        <div className="w-[178px] h-[20px] -mb-[1px] bg-white border border-b-0 border-black flex items-center pl-[8px] text-[#111] shrink-0">
          <svg width="14" height="15" viewBox="0 0 14 15" className="shrink-0">
            <path d="M1 1H10L13 4V14H1Z" fill="#f3f3f3" stroke="#aaa" />
            <path d="M3 5H11M3 7.5H11M3 10H11M3 12H11" stroke="#666" />
          </svg>
          <span className="ml-[2px] whitespace-nowrap">Назначение. Велосипед</span>
          <svg width="9" height="9" viewBox="0 0 9 9" className="ml-auto mr-[6px]"><path d="M1 1L8 8M8 1L1 8" stroke="#111" /></svg>
        </div>
        <div className="absolute right-[11px] top-[7px] flex gap-[8px]">
          <svg width="7" height="10" viewBox="0 0 7 10"><path d="M6 .5V9.5L1 5Z" fill="none" stroke="#777" /></svg>
          <svg width="7" height="10" viewBox="0 0 7 10"><path d="M1 .5V9.5L6 5Z" fill="none" stroke="#777" /></svg>
        </div>
      </div>
      <div className="flex flex-1 px-[12px] pt-[12px] min-h-0">
        <div className="w-[301px] h-[860px] shrink-0 border border-[#999] bg-white">
          <div className="h-[24px] bg-[#2680c2] flex items-center pl-[7px] pt-[1px] text-[11.5px] font-bold text-white">Структура</div>
          <div className="flex items-start pl-[11px] pt-[1px] text-[11px] text-[#111]">
            <div className="w-[12px] mt-[8px] border-t border-dotted border-black" />
            <svg width="16" height="14" viewBox="0 0 16 14" className="mt-[1px]">
              <path d="M.5 1H6L7.5 3H15.5V13.5H.5Z" fill="#6db0ea" stroke="#3a7ab5" />
              <rect x="1.5" y="4" width="13" height="8.5" fill="#8ec5f2" />
            </svg>
            <span className="ml-[2px] bg-[#f0f0f0] h-[16px] leading-[16px] px-[2px]">Назначение</span>
          </div>
        </div>
        <div className="w-[11px] shrink-0 flex justify-center pt-[413px]">
          <div className="h-[26px] border-l-2 border-dotted border-[#333]" />
        </div>
        <div className="w-[1198px] shrink-0 flex flex-col">
          <Toolbars />
          <Doc />
          <div className="flex justify-end mt-[16px]">
            <div className="w-[128px] h-[21px] border border-[#b4b4b4] rounded-[2px] bg-[#f2f2f2] flex items-center justify-center text-[11.5px] text-[#777]">Сохранить</div>
          </div>
        </div>
      </div>
    </div>
  );
}

function StatusBar() {
  const cells = [
    ['Admin\\Администратор Администратор', 'w-[230px] ml-[1px]'],
    ['CDB_DemoBike5', 'w-[97px] ml-[4px]'],
    ['18.03.2019', 'w-[63px] ml-[4px]'],
    ['11:22', 'w-[36px] ml-[4px]'],
  ];
  return (
    <div className="h-[21px] shrink-0 border-t-2 border-[#999] bg-[#f0eded] flex items-stretch pt-[1px] text-[11.8px] text-[#222]" style={ui}>
      {cells.map(([t, c]) => (
        <div key={t} className={'border border-b-0 border-[#c8c8c8] pl-[4px] leading-[18px] whitespace-nowrap ' + c}>{t}</div>
      ))}
    </div>
  );
}

export default function App() {
  return (
    <div className="w-[1919px] h-[1037px] flex flex-col overflow-hidden bg-[#f0f0f0]">
      <TitleBar />
      <TopBars />
      <div className="flex flex-1 min-h-0">
        <Sidebar />
        <RightPane />
      </div>
      <StatusBar />
    </div>
  );
}
